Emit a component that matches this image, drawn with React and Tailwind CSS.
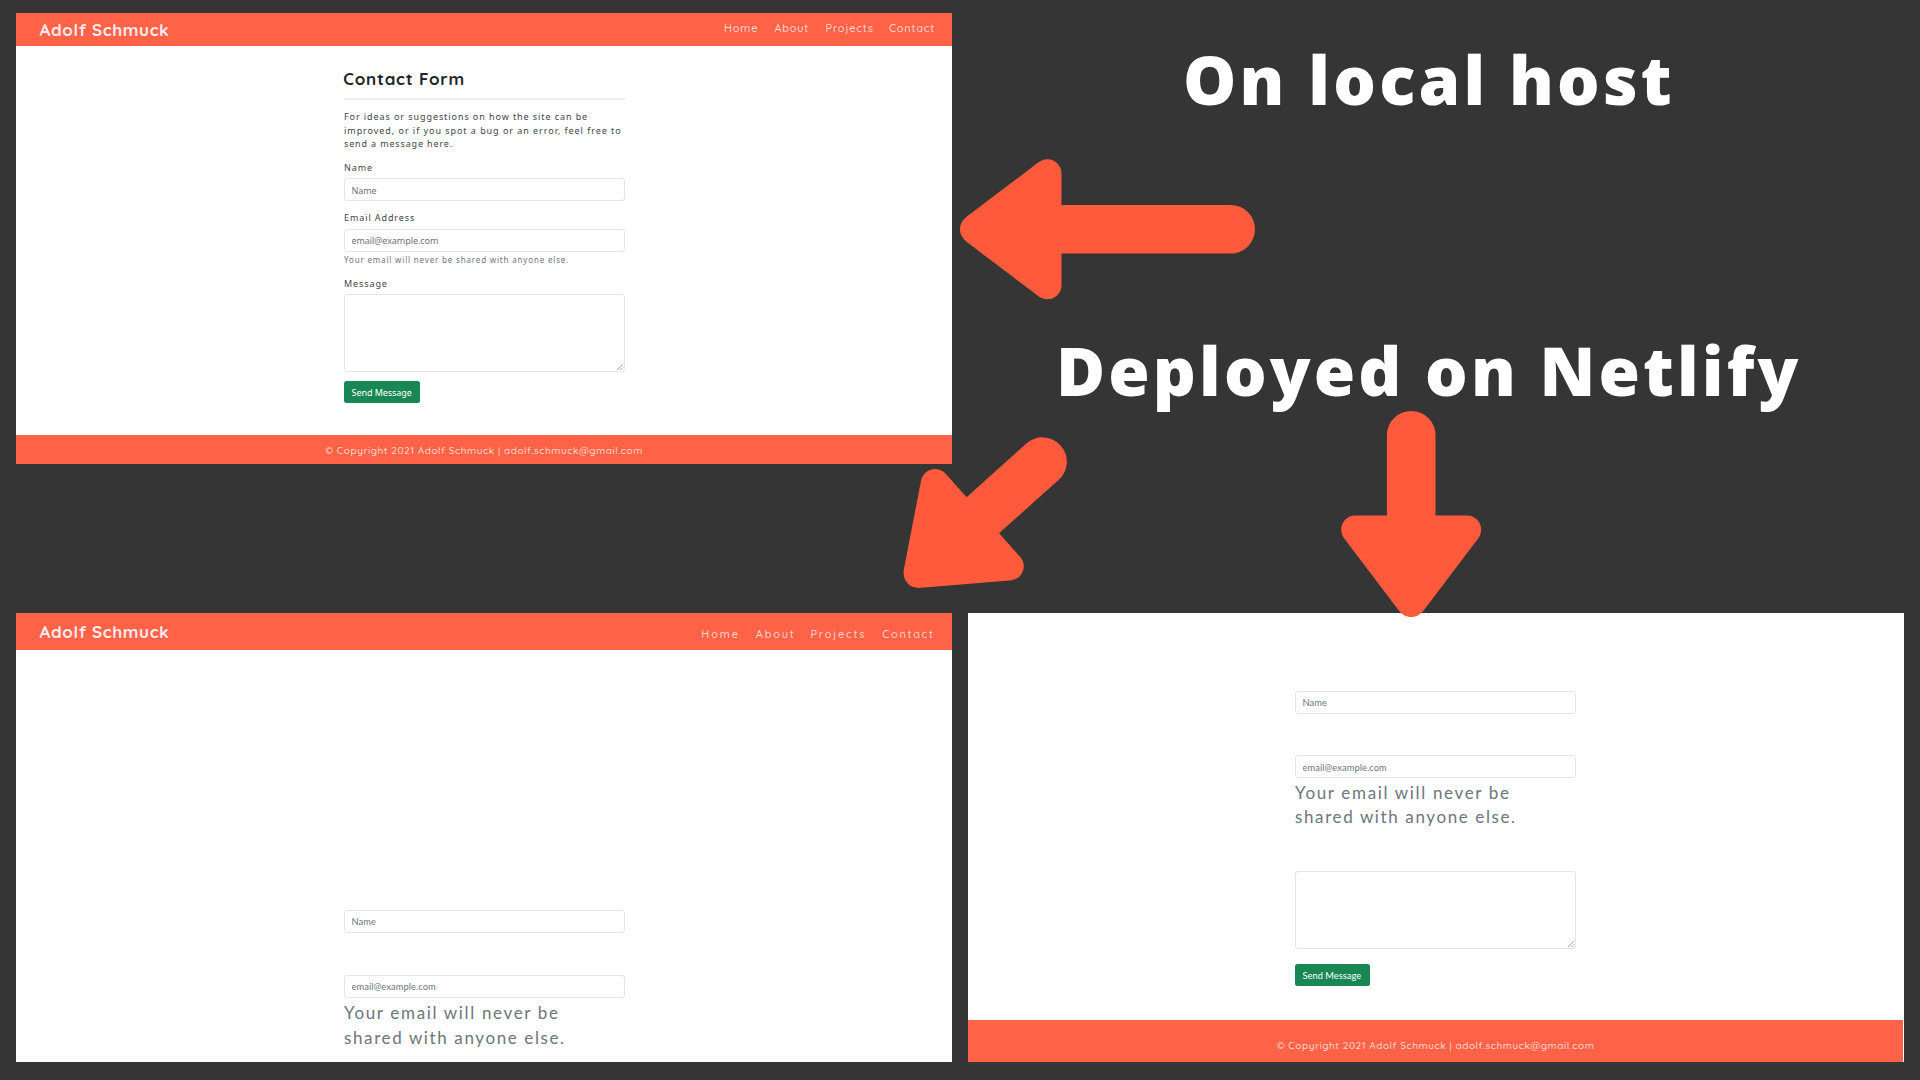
const NOTO = "font-['Noto_Sans','Open_Sans',sans-serif]";
const QUICKSAND = "font-['Quicksand','Lato',sans-serif]";
const LATO = "font-['Lato',sans-serif]";

function NavBar({ className, columns, spacing, linkLine }) {
  return (
    <header className={`flex shrink-0 items-start justify-between bg-[#ff6347] pl-[23.5px] ${QUICKSAND} ${className}`}>
      <span className="text-[17px] font-bold tracking-[0.6px] whitespace-nowrap text-[#ffeaf0]">Adolf Schmuck</span>
      <nav className={`grid text-[11px] font-medium text-[#ffd5d0] ${columns} ${linkLine}`}>
        {['Home', 'About', 'Projects', 'Contact'].map((label, i) => (
          <a key={label} className={`whitespace-nowrap ${spacing[i]}`}>{label}</a>
        ))}
      </nav>
    </header>
  );
}

function Field({ placeholder, className }) {
  return (
    <input
      placeholder={placeholder}
      className={`block h-[23px] w-full shrink-0 rounded-[3px] border border-[#e3e6e9] bg-white px-[6.5px] outline-none placeholder:text-[#6c757d] ${className}`}
    />
  );
}

function MessageBox({ className }) {
  return (
    <div className={`relative h-[78px] w-full shrink-0 rounded-[3px] border border-[#e3e6e9] bg-white ${className}`}>
      <svg className="absolute right-0 bottom-0 h-[8px] w-[8px]" viewBox="0 0 8 8" fill="none" stroke="#a0a0a0" strokeWidth="0.9">
        <path d="M1 7 L7 1 M4.3 7 L7 4.3" />
      </svg>
    </div>
  );
}

function SendButton({ className }) {
  return (
    <button className={`block shrink-0 rounded-[2.5px] bg-[#198754] pl-[7.5px] text-left whitespace-nowrap text-white ${className}`}>
      Send Message
    </button>
  );
}

function Footer({ className }) {
  return (
    <footer className={`mt-auto shrink-0 bg-[#ff6347] text-center text-[10px] font-medium tracking-[0.54px] whitespace-nowrap text-[#ffd5d0] ${QUICKSAND} ${className}`}>
      © Copyright 2021 Adolf Schmuck | adolf.schmuck@gmail.com
    </footer>
  );
}

function BigHelp({ className }) {
  return (
    <p className={`text-[17px] leading-[24.5px] whitespace-nowrap text-[#6c757d] ${LATO} ${className}`}>
      <span className="block tracking-[1.66px]">Your email will never be</span>
      <span className="block tracking-[1.61px]">shared with anyone else.</span>
    </p>
  );
}

/* Arrow along +x with its tip at the origin; only the shaft length varies. */
function arrowPath(length) {
  const end = length - 24.3;
  return `M0 0 C0 -5 2.5 -9.5 7.5 -13.2 L77.5 -66.2 C80.5 -68.7 84 -70 87.5 -70 C95.2 -70 101.5 -63.7 101.5 -56 L101.5 -24.3 L${end} -24.3 A24.3 24.3 0 0 1 ${end} 24.3 L101.5 24.3 L101.5 56 C101.5 63.7 95.2 70 87.5 70 C84 70 80.5 68.7 77.5 66.2 L7.5 13.2 C2.5 9.5 0 5 0 0 Z`;
}

function Arrows() {
  return (
    <svg className="pointer-events-none absolute inset-0 h-[1080px] w-[1920px]" viewBox="0 0 1920 1080" fill="#ff5a3c">
      <path transform="translate(960 229.3)" d={arrowPath(295)} />
      <path transform="translate(907.3 583) rotate(-41.9)" d={arrowPath(206)} />
      <path transform="translate(1411.2 617) rotate(-90)" d={arrowPath(206)} />
    </svg>
  );
}

function LocalPanel() {
  const label = 'text-[9px] leading-[13px] tracking-[0.9px] text-[#41464b]';
  return (
    <section className="flex h-[451px] flex-col bg-white">
      <NavBar
        className="h-[33px] leading-[33px]"
        columns="grid-cols-[50.5px_51.1px_63.5px_63px]"
        linkLine="leading-[30px]"
        spacing={['tracking-[0.9px]', 'tracking-[0.75px]', 'tracking-[0.8px]', 'tracking-[0.75px]']}
      />
      <form className={`ml-[328px] flex w-[281px] flex-col items-start ${NOTO}`}>
        <h2 className={`mt-[21px] -ml-[0.7px] text-[17px] leading-[24px] font-bold tracking-[0.75px] text-[#212529] ${QUICKSAND}`}>Contact Form</h2>
        <div className="mt-[7px] h-[2px] w-full bg-[#efefef]" />
        <p className="mt-[9.8px] text-[9px] leading-[13.75px] whitespace-nowrap text-[#41464b]">
          <span className="block tracking-[0.92px]">For ideas or suggestions on how the site can be</span>
          <span className="block tracking-[0.95px]">improved, or if you spot a bug or an error, feel free to</span>
          <span className="block tracking-[0.85px]">send a message here.</span>
        </p>
        <label className={`mt-[9.95px] ${label}`}>Name</label>
        <Field placeholder="Name" className="mt-[4px] pt-[2px] text-[9px] tracking-[-0.07px]" />
        <label className={`mt-[10px] ${label}`}>Email Address</label>
        <Field placeholder="email@example.com" className="mt-[5px] pt-0 text-[9px] tracking-[-0.07px]" />
        <p className="mt-[2px] text-[8px] leading-[11px] tracking-[0.83px] whitespace-nowrap text-[#6c757d]">
          Your email will never be shared with anyone else.
        </p>
        <label className={`mt-[12px] ${label}`}>Message</label>
        <MessageBox className="mt-[4px]" />
        <SendButton className="mt-[9px] h-[22px] w-[76px] pt-px text-[9px] tracking-[-0.05px]" />
      </form>
      <Footer className="h-[29px] leading-[31px]" />
    </section>
  );
}

function DeployedTopPanel() {
  return (
    <section className="flex h-[449px] flex-col bg-white">
      <NavBar
        className="h-[37px] leading-[37px]"
        columns="grid-cols-[54.5px_54.6px_71.9px_69.7px]"
        linkLine="pt-[2.5px]"
        spacing={['tracking-[1.9px]', 'tracking-[1.75px]', 'tracking-[1.75px]', 'tracking-[1.65px]']}
      />
      <form className={`ml-[328px] flex w-[281px] flex-col items-start ${LATO}`}>
        <Field placeholder="Name" className="mt-[260px] text-[9.3px] tracking-[0.08px]" />
        <Field placeholder="email@example.com" className="mt-[42px] text-[9.3px] tracking-[0.08px]" />
        <BigHelp className="mt-[3px]" />
      </form>
    </section>
  );
}

function DeployedBottomPanel() {
  return (
    <section className="mt-[203px] flex h-[449px] w-[936px] flex-col bg-white">
      <form className={`ml-[327px] flex w-[281px] flex-col items-start ${LATO}`}>
        <Field placeholder="Name" className="mt-[77.6px] text-[9.3px] leading-[14px] tracking-[0.08px]" />
        <Field placeholder="email@example.com" className="mt-[41.8px] pt-px text-[9.3px] leading-[14px] tracking-[0.08px]" />
        <BigHelp className="mt-[2.6px]" />
        <MessageBox className="mt-[41.2px]" />
        <SendButton className="mt-[14.6px] h-[22.5px] w-[75px] pt-px text-[9.3px] leading-[14px] tracking-[0.02px]" />
      </form>
      <Footer className="h-[42px] border-r border-white pt-[8px] leading-[35px]" />
    </section>
  );
}

export default function App() {
  return (
    <main className="relative flex h-[1080px] w-[1920px] gap-[16px] overflow-hidden bg-[#353535] pl-[16px]">
      <div className="flex w-[936px] shrink-0 flex-col gap-[149px] pt-[13px]">
        <LocalPanel />
        <DeployedTopPanel />
      </div>
      <div className="flex w-[936px] shrink-0 flex-col items-start">
        <h1 className="mt-[39px] ml-[215px] font-['Open_Sans',sans-serif] text-[67px] leading-[80px] font-extrabold tracking-[3.22px] whitespace-nowrap text-white">On local host</h1>
        <h1 className="mt-[211px] ml-[88px] font-['Open_Sans',sans-serif] text-[67px] leading-[80px] font-extrabold tracking-[3.14px] whitespace-nowrap text-white">Deployed on Netlify</h1>
        <DeployedBottomPanel />
      </div>
      <Arrows />
    </main>
  );
}
